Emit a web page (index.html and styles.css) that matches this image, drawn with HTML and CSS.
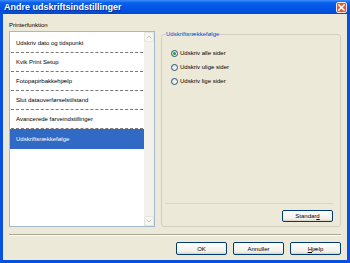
FILE: index.html
```html
<!DOCTYPE html>
<html lang="da">

<head>
    <meta charset="UTF-8" />
    <title>Andre udskriftsindstillinger</title>
    <link rel="stylesheet" href="styles.css">
</head>

<body>
    <div class="window">
        <!-- 标题栏 -->
        <div class="titlebar">
            <span class="title">Andre udskriftsindstillinger</span>
            <span class="close">
                <svg width="7" height="7" viewBox="0 0 7 7">
                    <path d="M1 1 L6 6 M6 1 L1 6" stroke="#fff" stroke-width="1.6" stroke-linecap="square" />
                </svg>
            </span>
        </div>

        <div class="client">
            <div class="panes">
                <!-- 左侧功能列表 -->
                <div class="func-col">
                    <div class="label">Printerfunktion</div>
                    <div class="listbox">
                        <ul class="items">
                            <li>Udskriv dato og tidspunkt</li>
                            <li>Kvik Print Setup</li>
                            <li>Fotopapirbakkehjælp</li>
                            <li>Slut dataoverførselstilstand</li>
                            <li>Avancerede farveindstillinger</li>
                            <li class="selected">Udskriftsrækkefølge</li>
                        </ul>
                        <div class="scrollbar">
                            <div class="sb-btn">
                                <svg width="6" height="4" viewBox="0 0 6 4">
                                    <path d="M0.5 3.5 L3 1 L5.5 3.5" fill="none" stroke="#C9C7BA" stroke-width="1" />
                                </svg>
                            </div>
                            <div class="sb-btn">
                                <svg width="6" height="4" viewBox="0 0 6 4">
                                    <path d="M0.5 0.5 L3 3 L5.5 0.5" fill="none" stroke="#C9C7BA" stroke-width="1" />
                                </svg>
                            </div>
                        </div>
                    </div>
                </div>

                <!-- 右侧分组 -->
                <fieldset class="group">
                    <legend>Udskriftsrækkefølge</legend>
                    <label class="radio first"><span class="dot checked"></span>Udskriv alle sider</label>
                    <label class="radio"><span class="dot"></span>Udskriv ulige sider</label>
                    <label class="radio"><span class="dot"></span>Udskriv lige sider</label>
                    <div class="group-foot">
                        <button class="btn">Standar<u>d</u></button>
                    </div>
                </fieldset>
            </div>

            <div class="sep"></div>

            <!-- 底部按钮 -->
            <div class="buttons">
                <button class="btn">OK</button>
                <button class="btn">Annuller</button>
                <button class="btn"><u>H</u>jælp</button>
            </div>
        </div>
    </div>
</body>

</html>
```

FILE: styles.css
```css
* {
    margin: 0;
    padding: 0;
    box-sizing: border-box;
}

ul {
    list-style: none;
}

body {
    font-family: "Liberation Sans", Arial, sans-serif;
    font-size: 6px;
    color: #000;
}

.window {
    display: flex;
    flex-direction: column;
    width: 350px;
    height: 263px;
    background-color: #0850E0;
}

.titlebar {
    display: flex;
    align-items: center;
    height: 14px;
    padding-left: 4px;
    background: linear-gradient(#3D8DF7 0%, #0A5EEC 20%, #0055E5 60%, #0049D8 100%);
}

.title {
    color: #fff;
    font-size: 9px;
    font-weight: bold;
    text-shadow: 1px 1px 0 #0A2E8C;
}

.close {
    display: flex;
    align-items: center;
    justify-content: center;
    width: 11px;
    height: 11px;
    margin-left: auto;
    margin-right: 3px;
    border: 1px solid #F4E8E0;
    border-radius: 2px;
    background-color: #E2582F;
}

.client {
    display: flex;
    flex-direction: column;
    flex: 1;
    margin: 0 3px 3px;
    padding: 7px 6px 0;
    background-color: #ECE9D8;
}

.panes {
    display: flex;
    gap: 6px;
}

.func-col {
    display: flex;
    flex-direction: column;
    width: 146px;
}

.label {
    height: 10px;
    line-height: 8px;
}

.listbox {
    display: flex;
    height: 196px;
    border: 1px solid #A5B9CD;
    background-color: #fff;
}

.items {
    flex: 1;
    padding-top: 2px;
}

.items li {
    height: 19px;
    line-height: 18px;
    margin: 0 1px;
    padding-left: 5px;
    border-bottom: 1px dashed #777;
}

.items li.selected {
    height: 20px;
    line-height: 20px;
    margin: 0;
    padding-left: 6px;
    border-bottom: none;
    background-color: #316AC5;
    color: #fff;
}

.scrollbar {
    display: flex;
    flex-direction: column;
    justify-content: space-between;
    width: 10px;
    background-color: #F3F1EB;
}

.sb-btn {
    display: flex;
    align-items: center;
    justify-content: center;
    height: 10px;
    border: 1px solid #E8E6DC;
    border-radius: 1px;
    background-color: #F7F6F1;
}

.group {
    display: flex;
    flex-direction: column;
    flex: 1;
    margin-top: 9px;
    padding: 0 7px 0 3px;
    border: 1px solid #D0D0BF;
    border-radius: 3px;
    min-width: 0;
}

.group legend {
    padding: 0 1px;
    line-height: 8px;
    color: #0046D5;
}

.radio {
    display: flex;
    align-items: center;
    gap: 2px;
    height: 14px;
    margin-left: 6px;
}

.radio.first {
    margin-top: 8px;
}

.dot {
    display: flex;
    align-items: center;
    justify-content: center;
    width: 7px;
    height: 7px;
    border: 1px solid #1C5180;
    border-radius: 50%;
    background: linear-gradient(135deg, #DCDCD6, #fff);
}

.dot.checked::after {
    content: "";
    width: 3px;
    height: 3px;
    border-radius: 50%;
    background-color: #21A121;
}

.group-foot {
    display: flex;
    justify-content: flex-end;
    margin-top: auto;
    padding: 6px 0 4px;
    border-top: 1px solid #D8D6C8;
}

.btn {
    width: 51px;
    height: 12px;
    border: 1px solid #003C74;
    border-radius: 2px;
    background: linear-gradient(#fff, #F1F0EA 80%, #D6D0C5);
    font-family: "Liberation Sans", Arial, sans-serif;
    font-size: 6px;
    color: #000;
}

.sep {
    height: 2px;
    margin-top: 7px;
    border-top: 1px solid #ACA899;
    border-bottom: 1px solid #fff;
}

.buttons {
    display: flex;
    justify-content: flex-end;
    gap: 6px;
    margin-top: 6px;
}

.buttons .btn {
    height: 13px;
}
```
